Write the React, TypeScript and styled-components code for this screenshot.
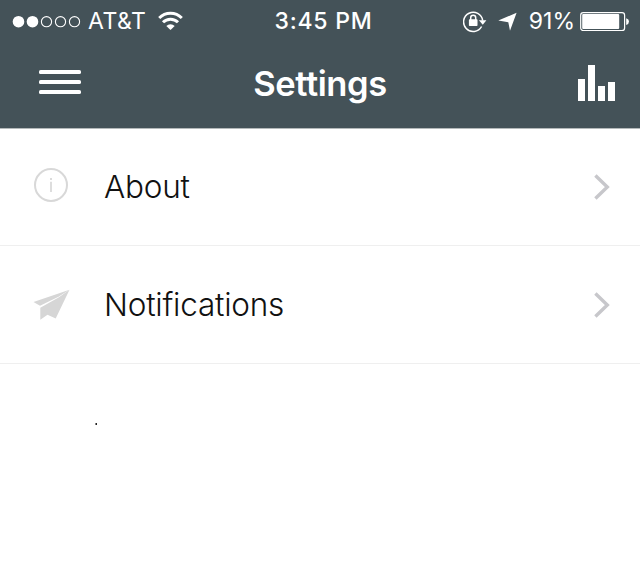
import React from 'react';
import styled, { createGlobalStyle } from 'styled-components';

const GlobalStyle = createGlobalStyle`
  * { box-sizing: border-box; }
  body {
    margin: 0;
    background: #fff;
    font-family: Inter, Roboto, "Liberation Sans", sans-serif;
  }
  svg { display: block; flex: none; }
`;

const Screen = styled.div`
  width: 640px;
  height: 568px;
  overflow: hidden;
  background: #fff;
`;

const Header = styled.header`
  height: 129px;
  background: #445258;
  color: #fff;
  border-bottom: 1px solid #b4b9ba;
`;

const StatusBar = styled.div`
  display: grid;
  grid-template-columns: 1fr 120px 1fr;
  align-items: center;
  height: 40px;
  padding: 0 11px 0 12px;
`;

const StatusGroup = styled.div<{ $end?: boolean }>`
  display: flex;
  align-items: center;
  justify-content: ${(p) => (p.$end ? 'flex-end' : 'flex-start')};
`;

const StatusText = styled.span<{ $weight?: number; $spacing?: number }>`
  padding-top: 1px;
  font-size: 23px;
  line-height: 40px;
  font-weight: ${(p) => p.$weight ?? 400};
  letter-spacing: ${(p) => p.$spacing ?? 0}px;
  white-space: nowrap;
  text-align: center;
`;

const Clock = styled(StatusText)`
  padding-left: 6px;
`;

const Carrier = styled(StatusText)`
  margin: 0 12px 0 7px;
`;

const Percent = styled(StatusText)`
  margin: 0 5px 0 12px;
`;

const RotationLock = styled.svg`
  margin-right: 11px;
`;

const NavBar = styled.nav`
  display: grid;
  grid-template-columns: 1fr auto 1fr;
  align-items: center;
  height: 88px;
  padding: 0 25px;
`;

const Title = styled.h1`
  margin: 0;
  font-size: 34.5px;
  line-height: 88px;
  font-weight: 600;
  letter-spacing: -0.4px;
`;

const NavButton = styled.button<{ $end?: boolean }>`
  display: flex;
  justify-self: ${(p) => (p.$end ? 'end' : 'start')};
  margin-left: ${(p) => (p.$end ? 0 : 14)}px;
  padding: 0 0 ${(p) => (p.$end ? 2 : 4)}px;
  border: 0;
  background: none;
  color: inherit;
`;

const List = styled.ul`
  margin: 0;
  padding: 0;
  list-style: none;
`;

const Row = styled.li<{ $first?: boolean }>`
  display: flex;
  align-items: center;
  height: ${(p) => (p.$first ? 117 : 118)}px;
  padding: 0 29px 0 33px;
  border-bottom: 1px solid #efefef;
`;

const RowIcon = styled.span`
  display: flex;
  width: 71px;
`;

const RowLabel = styled.span<{ $spacing: number }>`
  flex: 1;
  font-size: 31.5px;
  font-weight: 300;
  line-height: 40px;
  letter-spacing: ${(p) => p.$spacing}px;
  color: #111;
`;

const Speck = styled.div`
  width: 2px;
  height: 2px;
  margin: 59px 0 0 95px;
  background: linear-gradient(90deg, #888 50%, #222 50%);
`;

const Signal = () => (
  <svg width="69" height="40" viewBox="0 0 69 40">
    {[0, 1, 2, 3, 4].map((i) => (
      <circle
        key={i}
        cx={6.5 + i * 14}
        cy={20.7}
        r={i < 2 ? 5.8 : 5.1}
        fill={i < 2 ? '#fff' : 'none'}
        stroke={i < 2 ? 'none' : '#fff'}
        strokeWidth={1.1}
      />
    ))}
  </svg>
);

const Wifi = () => (
  <svg width="25" height="40" viewBox="0 0 25 40" fill="none" stroke="#fff">
    <path d="M1.2 17 A16 16 0 0 1 23.8 17" strokeWidth="3" />
    <path d="M5 21.3 A10.6 10.6 0 0 1 20 21.3" strokeWidth="3" />
    <path d="M12.5 29 L8.3 24.9 A6.2 6.2 0 0 1 16.7 24.9 Z" fill="#fff" stroke="none" />
  </svg>
);

const Lock = () => (
  <RotationLock width="24" height="40" viewBox="0 0 24 40" fill="none" stroke="#fff">
    <path d="M18.6 25.5 A9.6 9.6 0 1 1 19.7 19.6" strokeWidth="1.5" />
    <path d="M15.9 19.3 H23.4 L19.8 23.8 Z" fill="#fff" stroke="none" />
    <path d="M7.7 19 V16.8 A2.5 2.5 0 0 1 12.7 16.8 V19" strokeWidth="1.5" />
    <rect x="5.9" y="18.2" width="8.6" height="6.8" rx="0.8" fill="#fff" stroke="none" />
  </RotationLock>
);

const LocationArrow = () => (
  <svg width="19" height="40" viewBox="0 0 19 40" fill="#fff">
    <path d="M18.6 11.8 L12 29.8 L10.3 21.3 L0.3 19.6 Z" />
  </svg>
);

const Battery = () => (
  <svg width="49" height="40" viewBox="0 0 49 40">
    <rect x="0.7" y="11.7" width="43.9" height="17.8" rx="2.6" fill="none" stroke="#fff" strokeWidth="1.2" />
    <rect x="2.2" y="13" width="37" height="15" rx="1" fill="#fff" />
    <path d="M46.2 17.2 Q49 18 49 20.6 Q49 23.2 46.2 24 Z" fill="#fff" />
  </svg>
);

const Menu = () => (
  <svg width="42" height="26" viewBox="0 0 42 26" fill="#fff">
    <rect y="1" width="42" height="4" rx="1.6" />
    <rect y="11" width="42" height="4" rx="1.6" />
    <rect y="21" width="42" height="4" rx="1.6" />
  </svg>
);

const Bars = () => (
  <svg width="38" height="38" viewBox="0 0 38 38" fill="#fff">
    <rect x="1" y="15" width="7" height="22" />
    <rect x="11" y="1" width="7" height="36" />
    <rect x="21" y="22" width="7" height="15" />
    <rect x="31" y="18" width="7" height="19" />
  </svg>
);

const Info = () => (
  <svg width="36" height="38" viewBox="0 0 36 38">
    <circle cx="18" cy="17" r="16" fill="none" stroke="#d8d8d8" strokeWidth="2" />
    <path d="M18 13.8 V24" stroke="#cfcfcf" strokeWidth="1.4" />
    <circle cx="18" cy="10.9" r="1" fill="#cfcfcf" />
  </svg>
);

const Plane = () => (
  <svg width="37" height="32" viewBox="0 0 37 32" fill="#d6d6d6">
    <path d="M36.5 0.8 L0.5 13 L7 16.8 L25.5 7.8 Z" />
    <path d="M36.5 0.8 L25.5 8.6 L7.3 18.8 V30.8 L14.5 25.8 L22.7 29.6 Z" />
  </svg>
);

const Chevron = () => (
  <svg width="18" height="30" viewBox="0 0 18 30">
    <path d="M2.4 3.6 L14.3 15 L2.4 26.4" fill="none" stroke="#c7c7cb" strokeWidth="3.4" />
  </svg>
);

export default function App() {
  return (
    <>
      <GlobalStyle />
      <Screen>
        <Header>
          <StatusBar>
            <StatusGroup>
              <Signal />
              <Carrier $spacing={0.5}>AT&amp;T</Carrier>
              <Wifi />
            </StatusGroup>
            <Clock $weight={500} $spacing={0.8}>3:45 PM</Clock>
            <StatusGroup $end>
              <Lock />
              <LocationArrow />
              <Percent>91%</Percent>
              <Battery />
            </StatusGroup>
          </StatusBar>
          <NavBar>
            <NavButton aria-label="Menu"><Menu /></NavButton>
            <Title>Settings</Title>
            <NavButton $end aria-label="Statistics"><Bars /></NavButton>
          </NavBar>
        </Header>
        <List>
          <Row $first>
            <RowIcon><Info /></RowIcon>
            <RowLabel $spacing={-0.2}>About</RowLabel>
            <Chevron />
          </Row>
          <Row>
            <RowIcon><Plane /></RowIcon>
            <RowLabel $spacing={-0.22}>Notifications</RowLabel>
            <Chevron />
          </Row>
        </List>
        <Speck />
      </Screen>
    </>
  );
}
